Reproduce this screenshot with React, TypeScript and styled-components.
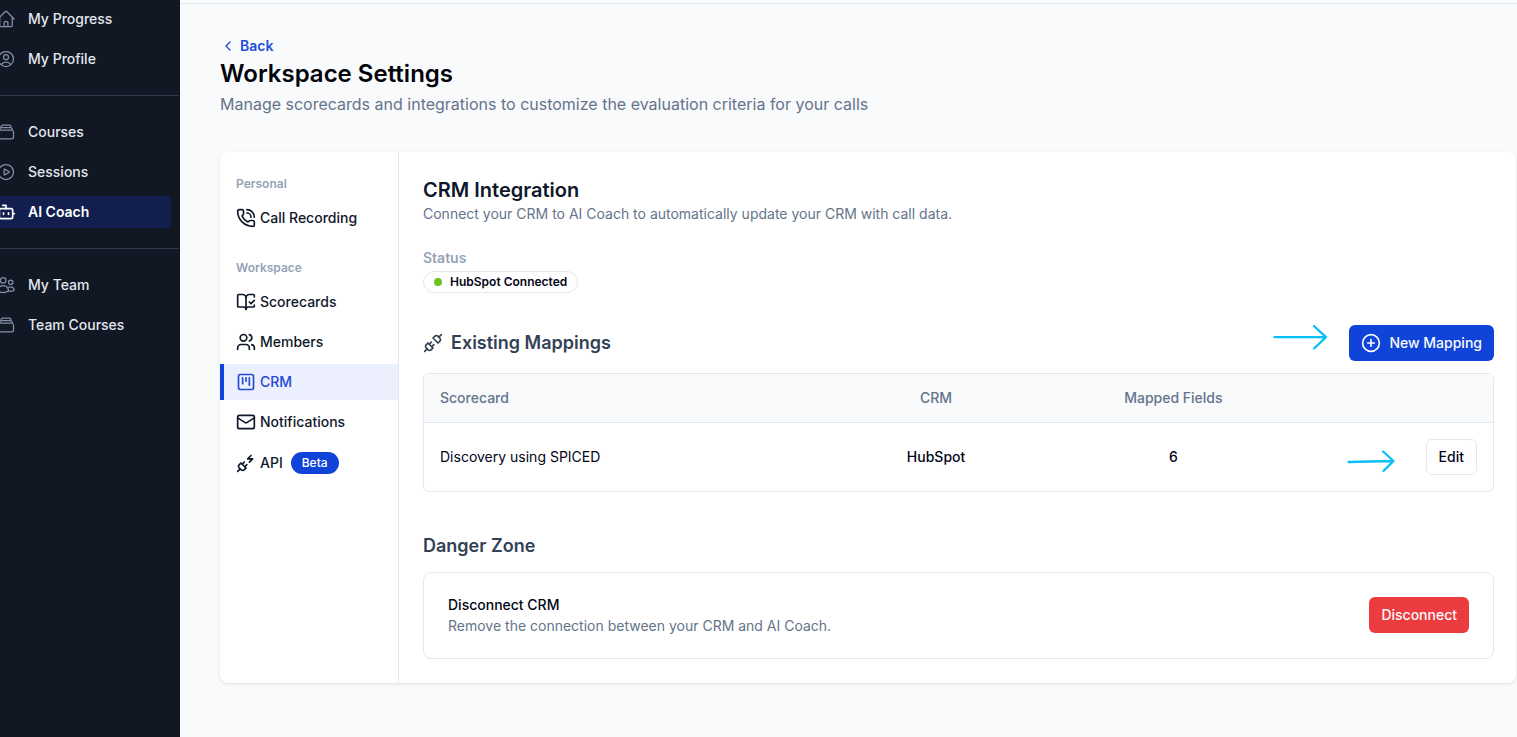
import React from "react";
import styled, { createGlobalStyle, css } from "styled-components";
import {
  BookOpenCheck,
  Bot,
  ChevronLeft,
  CirclePlus,
  Mail,
  PhoneCall,
  PlugZap,
  SquareKanban,
  Unplug,
  Users,
} from "lucide-react";
import {
  HiOutlineHome,
  HiOutlinePlayCircle,
  HiOutlineRectangleStack,
  HiOutlineUserCircle,
  HiOutlineUsers,
} from "react-icons/hi2";

const GlobalStyle = createGlobalStyle`
  *, *::before, *::after { box-sizing: border-box; }
  body {
    margin: 0;
    background: #f9fafc;
    color: #020617;
    font-family: Inter, "Liberation Sans", sans-serif;
    font-size: 14px;
    line-height: 20px;
  }
  h1, h2, h3, p, ul { margin: 0; padding: 0; }
  ul { list-style: none; }
  a { color: inherit; text-decoration: none; }
  button { font: inherit; cursor: pointer; }
`;

const Shell = styled.div`
  display: flex;
  min-height: 100vh;
`;

const Sidebar = styled.nav`
  flex: 0 0 180px;
  padding-top: 3px;
  overflow: hidden;
  background: #111723;
`;

const SideGroup = styled.ul`
  display: flex;
  flex-direction: column;
  gap: 8px;
  padding: 0 9px 20px 0;
`;

const SideDivider = styled.hr`
  height: 1px;
  margin: 0 1px 20px 0;
  border: 0;
  background: #2f3a4c;
`;

const SideLink = styled.a<{ $active?: boolean }>`
  display: flex;
  align-items: center;
  gap: 12px;
  height: 32px;
  margin-left: -16px;
  padding-left: 12px;
  border-radius: 4px;
  color: #e2e8f0;
  font-weight: 500;

  svg {
    flex: none;
    color: #8290a8;
  }

  ${(p) =>
    p.$active &&
    css`
      background: #121f4e;
      color: #ffffff;
      font-weight: 600;

      svg {
        color: #ffffff;
      }
    `}
`;

const Main = styled.main`
  flex: 1;
  min-width: 0;
`;

const TopEdge = styled.div`
  height: 4px;
  border-bottom: 1px solid #e2e6ee;
`;

const Page = styled.div`
  padding: 32px 1px 54px 40px;
`;

const BackLink = styled.a`
  display: inline-flex;
  align-items: center;
  gap: 4px;
  color: #1d4ed8;
  font-weight: 600;
  vertical-align: top;
`;

const PageTitle = styled.h1`
  margin-top: 2px;
  color: #020409;
  font-size: 24px;
  font-weight: 600;
  line-height: 32px;
`;

const PageIntro = styled.p`
  margin-top: 2px;
  color: #64748b;
  font-size: 16px;
  line-height: 24px;
`;

const Card = styled.div`
  display: flex;
  margin-top: 36px;
  border-radius: 8px;
  background: #ffffff;
  box-shadow: 0 1px 3px rgba(15, 23, 42, 0.12);
`;

const SettingsNav = styled.nav`
  flex: 0 0 179px;
  padding-top: 24px;
  border-right: 1px solid #e2e8f0;
`;

const NavLabel = styled.h2`
  padding-left: 16px;
  color: #94a3b8;
  font-size: 12px;
  font-weight: 600;
  line-height: 16px;
`;

const NavList = styled.ul`
  display: flex;
  flex-direction: column;
  gap: 4px;
  padding: 8px 0 24px;
`;

const NavLink = styled.a<{ $active?: boolean }>`
  display: flex;
  align-items: center;
  gap: 4px;
  padding: 8px 16px;
  color: #0f172a;
  font-weight: 500;

  ${(p) =>
    p.$active &&
    css`
      padding-left: 12px;
      border-left: 4px solid #1044d8;
      background: #ebeffe;
      color: #2549d0;
    `}
`;

const BetaBadge = styled.span`
  margin-left: 4px;
  padding: 3px 11px;
  border-radius: 11px;
  background: #1044d8;
  color: #ffffff;
  font-size: 12px;
  font-weight: 500;
  line-height: 16px;
`;

const Content = styled.section`
  flex: 1;
  min-width: 0;
  padding: 24px 22px 24px 24px;
`;

const SectionTitle = styled.h2`
  color: #0f172a;
  font-size: 20px;
  font-weight: 600;
  line-height: 28px;
`;

const Muted = styled.p`
  color: #64748b;
`;

const StatusLabel = styled.p`
  margin-top: 24px;
  color: #94a3b8;
  font-weight: 600;
`;

const StatusBadge = styled.div`
  display: inline-flex;
  align-items: center;
  gap: 8px;
  margin-top: 3px;
  padding: 2px 10px;
  border: 1px solid #e2e8f0;
  border-radius: 11px;
  color: #020617;
  font-size: 12px;
  font-weight: 600;
  line-height: 16px;
  vertical-align: top;
`;

const StatusDot = styled.span`
  width: 8px;
  height: 8px;
  border-radius: 50%;
  background: #6cc424;
`;

const MappingsHeader = styled.div`
  display: flex;
  align-items: center;
  justify-content: space-between;
  margin-top: 32px;
`;

const Subtitle = styled.h3`
  display: flex;
  align-items: center;
  gap: 8px;
  color: #334155;
  font-size: 18px;
  font-weight: 600;
  line-height: 28px;
`;

const ButtonSlot = styled.div`
  position: relative;
  display: inline-block;
  vertical-align: top;
`;

const Button = styled.button<{ $tone?: "primary" | "danger" }>`
  display: inline-flex;
  align-items: center;
  gap: 8px;
  height: 36px;
  padding: 0 12px;
  border: 0;
  border-radius: 6px;
  background: ${(p) => (p.$tone === "danger" ? "#ec3c40" : "#1044d8")};
  color: #f8fafc;
  font-weight: 500;
`;

const OutlineButton = styled(Button)`
  border: 1px solid #e2e8f0;
  background: #ffffff;
  color: #020617;
`;

const Pointer = styled.svg<{ $gap: number }>`
  position: absolute;
  right: calc(100% + ${(p) => p.$gap}px);
  top: 0;
  overflow: visible;
  pointer-events: none;
`;

const TableFrame = styled.div`
  margin-top: 12px;
  border: 1px solid #e2e8f0;
  border-radius: 6px;
  overflow: hidden;
`;

const Table = styled.table`
  width: 100%;
  border-spacing: 0;
  table-layout: fixed;
`;

const HeadCell = styled.th<{ $width?: string; $align?: string }>`
  width: ${(p) => p.$width ?? "auto"};
  height: 49px;
  padding: 0 16px;
  border-bottom: 1px solid #e2e8f0;
  background: #f8fafc;
  color: #64748b;
  font-weight: 500;
  text-align: ${(p) => p.$align ?? "center"};
`;

const Cell = styled.td<{ $align?: string; $strong?: boolean }>`
  padding: 16px;
  color: #020617;
  font-weight: ${(p) => (p.$strong ? 500 : 400)};
  text-align: ${(p) => p.$align ?? "center"};
`;

const DangerTitle = styled(Subtitle)`
  margin-top: 40px;
`;

const DangerBox = styled.div`
  display: flex;
  align-items: center;
  justify-content: space-between;
  margin-top: 12px;
  padding: 24px 24px 25px;
  border: 1px solid #e2e8f0;
  border-radius: 8px;
`;

const DangerText = styled.div`
  display: flex;
  flex-direction: column;
  gap: 1px;
  margin: -4px 0;
`;

const DangerName = styled.p`
  color: #020617;
  font-weight: 500;
`;

const sideGroups = [
  [
    { label: "My Progress", icon: HiOutlineHome },
    { label: "My Profile", icon: HiOutlineUserCircle },
  ],
  [
    { label: "Courses", icon: HiOutlineRectangleStack },
    { label: "Sessions", icon: HiOutlinePlayCircle },
    { label: "AI Coach", icon: Bot, active: true },
  ],
  [
    { label: "My Team", icon: HiOutlineUsers },
    { label: "Team Courses", icon: HiOutlineRectangleStack },
  ],
];

const settingsGroups = [
  { title: "Personal", items: [{ label: "Call Recording", icon: PhoneCall }] },
  {
    title: "Workspace",
    items: [
      { label: "Scorecards", icon: BookOpenCheck },
      { label: "Members", icon: Users },
      { label: "CRM", icon: SquareKanban, active: true },
      { label: "Notifications", icon: Mail },
      { label: "API", icon: PlugZap, beta: true },
    ],
  },
];

const mappings = [{ scorecard: "Discovery using SPICED", crm: "HubSpot", fields: 6 }];

export default function App() {
  return (
    <>
      <GlobalStyle />
      <Shell>
        <Sidebar aria-label="Main">
          {sideGroups.map((group, i) => (
            <React.Fragment key={group[0].label}>
              {i > 0 && <SideDivider />}
              <SideGroup>
                {group.map(({ label, icon: Icon, ...rest }) => (
                  <li key={label}>
                    <SideLink href="#" $active={"active" in rest}>
                      <Icon size={20} />
                      {label}
                    </SideLink>
                  </li>
                ))}
              </SideGroup>
            </React.Fragment>
          ))}
        </Sidebar>
        <Main>
          <TopEdge />
          <Page>
            <BackLink href="#">
              <ChevronLeft size={16} />
              Back
            </BackLink>
            <PageTitle>Workspace Settings</PageTitle>
            <PageIntro>
              Manage scorecards and integrations to customize the evaluation criteria for your calls
            </PageIntro>
            <Card>
              <SettingsNav aria-label="Settings">
                {settingsGroups.map((group) => (
                  <React.Fragment key={group.title}>
                    <NavLabel>{group.title}</NavLabel>
                    <NavList>
                      {group.items.map(({ label, icon: Icon, ...rest }) => (
                        <li key={label}>
                          <NavLink href="#" $active={"active" in rest}>
                            <Icon size={20} />
                            {label}
                            {"beta" in rest && <BetaBadge>Beta</BetaBadge>}
                          </NavLink>
                        </li>
                      ))}
                    </NavList>
                  </React.Fragment>
                ))}
              </SettingsNav>
              <Content>
                <SectionTitle>CRM Integration</SectionTitle>
                <Muted>Connect your CRM to AI Coach to automatically update your CRM with call data.</Muted>
                <StatusLabel>Status</StatusLabel>
                <StatusBadge>
                  <StatusDot />
                  HubSpot Connected
                </StatusBadge>
                <MappingsHeader>
                  <Subtitle>
                    <Unplug size={20} />
                    Existing Mappings
                  </Subtitle>
                  <ButtonSlot>
                    <Pointer $gap={22} width="54" height="26" viewBox="0 0 54 26" aria-hidden="true">
                      <path
                        d="M1.5 12.2H52M41 1L53 12.2L41 23.5"
                        fill="none"
                        stroke="#08bff8"
                        strokeWidth="2.3"
                        strokeLinecap="round"
                        strokeLinejoin="round"
                      />
                    </Pointer>
                    <Button type="button">
                      <CirclePlus size={20} />
                      New Mapping
                    </Button>
                  </ButtonSlot>
                </MappingsHeader>
                <TableFrame>
                  <Table>
                    <thead>
                      <tr>
                        <HeadCell $align="left">Scorecard</HeadCell>
                        <HeadCell $width="22.2%">CRM</HeadCell>
                        <HeadCell $width="22.2%">Mapped Fields</HeadCell>
                        <HeadCell $width="18.8%" aria-label="Actions" />
                      </tr>
                    </thead>
                    <tbody>
                      {mappings.map((m) => (
                        <tr key={m.scorecard}>
                          <Cell $align="left">{m.scorecard}</Cell>
                          <Cell $strong>{m.crm}</Cell>
                          <Cell $strong>{m.fields}</Cell>
                          <Cell $align="right">
                            <ButtonSlot>
                              <Pointer $gap={31} width="48" height="36" viewBox="0 0 48 36" aria-hidden="true">
                                <path
                                  d="M1.5 23L46 22M36 12.5L46.5 22L36.5 32"
                                  fill="none"
                                  stroke="#08bff8"
                                  strokeWidth="2.3"
                                  strokeLinecap="round"
                                  strokeLinejoin="round"
                                />
                              </Pointer>
                              <OutlineButton type="button">Edit</OutlineButton>
                            </ButtonSlot>
                          </Cell>
                        </tr>
                      ))}
                    </tbody>
                  </Table>
                </TableFrame>
                <DangerTitle>Danger Zone</DangerTitle>
                <DangerBox>
                  <DangerText>
                    <DangerName>Disconnect CRM</DangerName>
                    <Muted>Remove the connection between your CRM and AI Coach.</Muted>
                  </DangerText>
                  <Button type="button" $tone="danger">
                    Disconnect
                  </Button>
                </DangerBox>
              </Content>
            </Card>
          </Page>
        </Main>
      </Shell>
    </>
  );
}
